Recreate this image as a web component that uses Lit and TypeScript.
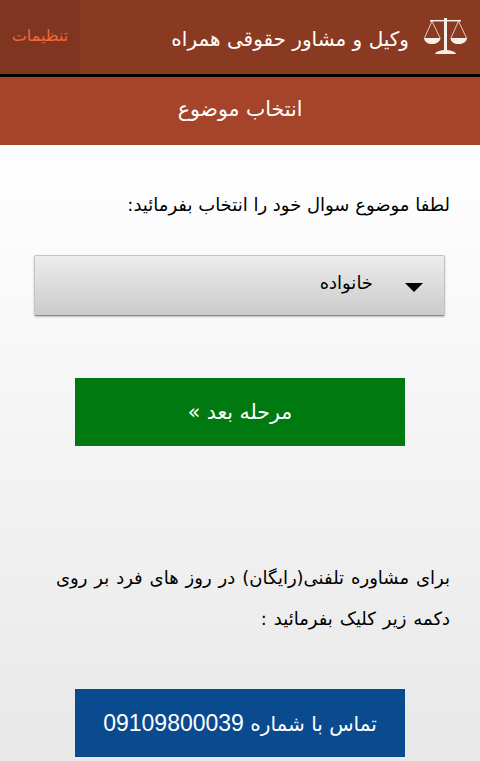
import { LitElement, html, css } from "lit";
import { customElement } from "lit/decorators.js";

@customElement("app-root")
export class AppRoot extends LitElement {
  static styles = css`
    :host {
      display: block;
      width: 480px;
      height: 761px;
      overflow: hidden;
      font-family: "DejaVu Sans", sans-serif;
      background: linear-gradient(#ffffff 145px, #e8e8e8 761px);
      color: #000;
    }
    .top {
      height: 74px;
      display: flex;
      align-items: stretch;
      justify-content: space-between;
      background: #8b3a22;
      border-bottom: 3px solid #000;
    }
    .settings {
      width: 80px;
      background: #7f351f;
      color: #f4673a;
      font-size: 16px;
      display: flex;
      align-items: center;
      justify-content: center;
      padding-bottom: 3px;
      box-sizing: border-box;
    }
    .brand {
      display: flex;
      align-items: center;
      gap: 15px;
      padding-right: 13px;
      color: #fff;
      font-size: 20px;
    }
    .brand span { padding-top: 4px; }
    .brand svg { display: block; margin-top: -1px; }
    .title {
      height: 68px;
      background: #a54428;
      color: #fff;
      font-size: 20.5px;
      display: flex;
      align-items: center;
      justify-content: center;
      padding-bottom: 4px;
      box-sizing: border-box;
    }
    .content {
      display: flex;
      flex-direction: column;
      padding: 0 30px;
    }
    .prompt {
      font-size: 18px;
      margin: 46px 0 0;
      line-height: 28px;
    }
    .select {
      margin: 36px 5px 0 4px;
      height: 61px;
      box-sizing: border-box;
      border-radius: 2px;
      border: 1px solid #c4c4c4;
      border-bottom: 1px solid #8a8a8a;
      box-shadow: 0 1px 2px rgba(0, 0, 0, 0.25);
      background: linear-gradient(#ececec, #cbcbcb);
      display: flex;
      align-items: center;
      gap: 32px;
      padding: 0 21px 0 0;
      font-size: 18px;
    }
    .select span { padding-bottom: 6px; }
    .caret {
      width: 0;
      height: 0;
      margin-top: 4px;
      border-left: 9px solid transparent;
      border-right: 9px solid transparent;
      border-top: 9px solid #000;
    }
    .btn {
      align-self: center;
      width: 330px;
      height: 68px;
      display: flex;
      align-items: center;
      justify-content: center;
      color: #fff;
      font-size: 20.5px;
      white-space: pre;
    }
    .next { background: #007a10; margin-top: 62px; }
    .note {
      font-size: 18px;
      word-spacing: 1.2px;
      line-height: 41px;
      margin: 111px 0 0;
    }
    .call { background: #0a4a8f; margin-top: 50px; font-size: 20px; }
    .num { font-family: "Liberation Sans", sans-serif; font-size: 23px; }
  `;

  render() {
    return html`
      <div class="top" dir="ltr">
        <div class="settings">تنظیمات</div>
        <div class="brand">
          <span dir="rtl">وکیل و مشاور حقوقی همراه</span>
          <svg width="43" height="37" viewBox="0 0 43 37" fill="#f6f0ea" stroke="#f6f0ea">
            <rect x="20" y="0" width="3" height="33" stroke="none"/>
            <path d="M6 2.700 H37" stroke-width="1.500" fill="none"/>
            <path d="M8 3 L0.500 20 M8 3 L16 20 M34.500 3 L27 20 M34.500 3 L42.500 20" stroke-width="0.800" fill="none"/>
            <path d="M0 20 H16.500 C16 24 12 26 8 26 C4 26 0.500 24 0 20 Z M26.500 20 H43 C42.500 24 39 26 34.500 26 C30 26 27 24 26.500 20 Z" stroke="none"/>
            <path d="M11 36 C12 33 18 32 21.500 32 C25 32 31 33 32 36 Z" stroke="none"/>
          </svg>
        </div>
      </div>
      <div class="title">انتخاب موضوع</div>
      <div class="content" dir="rtl">
        <p class="prompt">لطفا موضوع سوال خود را انتخاب بفرمائید:</p>
        <div class="select">
          <div class="caret"></div>
          <span>خانواده</span>
        </div>
        <div class="btn next">مرحله بعد »</div>
        <p class="note">برای مشاوره تلفنی(رایگان) در روز های فرد بر روی دکمه زیر کلیک بفرمائید :</p>
        <div class="btn call"><span>تماس با شماره <span class="num">09109800039</span></span></div>
      </div>
    `;
  }
}
